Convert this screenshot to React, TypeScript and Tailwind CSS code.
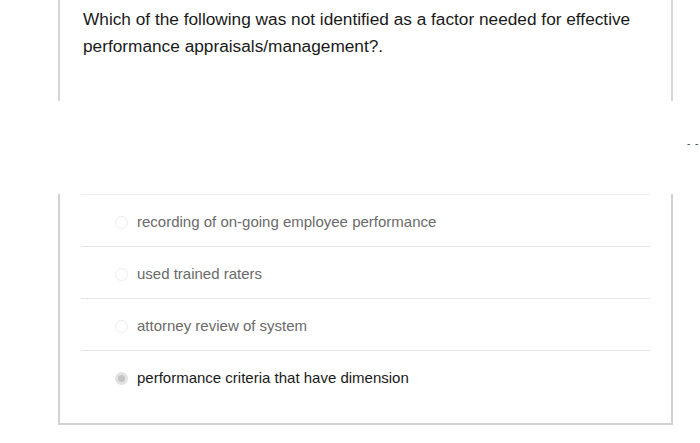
const options = [
  { text: 'recording of on-going employee performance', selected: false },
  { text: 'used trained raters', selected: false },
  { text: 'attorney review of system', selected: false },
  { text: 'performance criteria that have dimension', selected: true },
]

export default function App() {
  return (
    <div className="w-[700px] h-[443px] bg-white font-['Liberation_Sans',Arial,sans-serif] relative overflow-hidden">
      {/* question card */}
      <div className="ml-[58px] w-[615px] h-[101px] border-x-2 border-[#d6d6d6] pl-[23px] pt-[6px]">
        <p className="text-[17.25px] leading-[27px] text-[#1a1a1a]">
          Which of the following was not identified as a factor needed for effective
          <br />
          performance appraisals/management?.
        </p>
      </div>

      <span className="absolute left-[687px] top-[139px] text-[10px] leading-none text-[#444] tracking-[1px]">- -</span>

      {/* answers card */}
      <div className="mt-[93px] ml-[58px] w-[615px] h-[231px] border-x-2 border-b-2 border-[#d2d2d2] px-[21px]">
        {options.map((o, i) => (
          <div
            key={i}
            className={`h-[52px] flex items-center pl-[34px] pt-[4px] border-t ${i === 0 ? 'border-[#f0f0f0]' : 'border-[#e4e4e4]'}`}
          >
            {o.selected ? (
              <span className="w-[13px] h-[13px] rounded-full bg-[#e2e2e2] flex items-center justify-center mr-[9px]">
                <span className="w-[7px] h-[7px] rounded-full bg-[#c4c4c4]" />
              </span>
            ) : (
              <span className="w-[13px] h-[13px] rounded-full border border-[#ececec] mr-[9px]" />
            )}
            <span className={`text-[15px] ${o.selected ? 'text-[#1a1a1a]' : 'text-[#6a6a6a]'}`}>{o.text}</span>
          </div>
        ))}
      </div>
    </div>
  )
}
